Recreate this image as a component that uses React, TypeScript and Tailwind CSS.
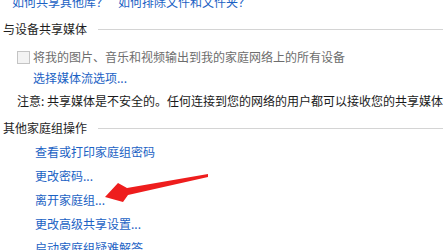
const LINK = "text-[#1b62c4]";

function SectionHeader({ title, className }: { title: string; className?: string }) {
  return (
    <div className={`flex h-4 items-center gap-[11px] pl-[3px] text-[#1e1e1e] ${className ?? ""}`}>
      <span className="whitespace-nowrap">{title}</span>
      <div className="h-px flex-1 bg-[#d4d4d4]" />
    </div>
  );
}

const actions = [
  "查看或打印家庭组密码",
  "更改密码...",
  "离开家庭组...",
  "更改高级共享设置...",
  "启动家庭组疑难解答",
];

export default function App() {
  return (
    <div
      className="relative flex h-[250px] w-[443px] flex-col overflow-hidden bg-white text-[12px] leading-4"
      style={{ fontFamily: '"Noto Sans CJK SC", "Noto Sans", sans-serif' }}
    >
      <div className={`-mt-[6px] flex h-4 items-center gap-[10px] whitespace-nowrap pl-3 ${LINK}`}>
        <span>如何共享其他库？</span>
        <span>如何排除文件和文件夹？</span>
      </div>

      <SectionHeader title="与设备共享媒体" className="mt-[11px]" />

      <div className="mt-3 flex h-4 items-center gap-[3px] whitespace-nowrap pl-[17px]">
        <span className="h-[13px] w-[13px] shrink-0 border border-[#c4c4c4] bg-[#f3f3f3]" />
        <span className="text-[#6d6d6d]">将我的图片、音乐和视频输出到我的家庭网络上的所有设备</span>
      </div>

      <div className={`mt-[5px] h-4 pl-[33px] ${LINK}`}>选择媒体流选项...</div>

      <div className="mt-[7px] h-4 whitespace-nowrap pl-[17px] text-[#1a1a1a]">
        注意: 共享媒体是不安全的。任何连接到您的网络的用户都可以接收您的共享媒体内容。
      </div>

      <SectionHeader title="其他家庭组操作" className="mt-[11px]" />

      <div className="mt-2 flex flex-col gap-2 pl-[35px]">
        {actions.map((a) => (
          <div key={a} className={`h-4 whitespace-nowrap ${LINK}`}>
            {a}
          </div>
        ))}
      </div>

      {/* red annotation arrow pointing at 离开家庭组 */}
      <svg className="pointer-events-none absolute inset-0" width="443" height="250" viewBox="0 0 443 250">
        <polygon
          points="208,174 127,188 118,183 105,197 123,202 128,195 208,177"
          fill="#ee1d1d"
        />
      </svg>
    </div>
  );
}
